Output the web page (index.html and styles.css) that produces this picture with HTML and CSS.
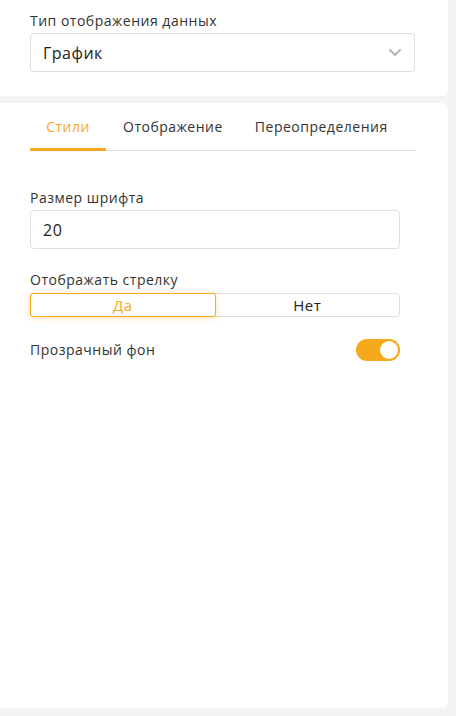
FILE: index.html
```html
<!DOCTYPE html>
<html lang="ru">
<head>
<meta charset="utf-8">
<link rel="stylesheet" href="styles.css">
</head>
<body>
<div class="page">
  <section class="card card-top">
    <label class="label">Тип отображения данных</label>
    <div class="select">
      <span>График</span>
      <svg class="chev" width="14" height="9" viewBox="0 0 14 9"><path d="M2 2l5 5 5-5" fill="none" stroke="#b5b5b5" stroke-width="2" stroke-linecap="round" stroke-linejoin="round"/></svg>
    </div>
  </section>
  <section class="card card-main">
    <nav class="tabs">
      <div class="tab active">Стили</div>
      <div class="tab">Отображение</div>
      <div class="tab">Переопределения</div>
    </nav>
    <div class="form">
      <div class="field">
        <label class="label">Размер шрифта</label>
        <div class="input">20</div>
      </div>
      <div class="field">
        <label class="label">Отображать стрелку</label>
        <div class="segment">
          <div class="seg active">Да</div>
          <div class="seg">Нет</div>
        </div>
      </div>
      <div class="row">
        <span class="label">Прозрачный фон</span>
        <div class="toggle"><div class="knob"></div></div>
      </div>
    </div>
  </section>
</div>
</body>
</html>
```
FILE: styles.css
```css
* { box-sizing: border-box; }
html, body { margin: 0; padding: 0; }
body {
  background: #f3f3f3;
  font-family: "Open Sans", "Noto Sans", sans-serif;
  color: #333;
  width: 456px;
  height: 716px;
  letter-spacing: 0.5px;
}
.page {
  display: flex;
  flex-direction: column;
  gap: 7px;
  width: 448px;
}
.card {
  background: #fff;
  border-radius: 0 0 6px 0;
}
.card-top {
  height: 96px;
  padding: 12px 33px 0 30px;
  display: flex;
  flex-direction: column;
  gap: 3px;
}
.label {
  font-size: 14px;
  line-height: 18px;
  color: #333;
}
.select {
  height: 39px;
  border: 1px solid #dedede;
  border-radius: 4px;
  display: flex;
  align-items: center;
  justify-content: space-between;
  padding: 0 12px 0 12px;
  font-size: 16px;
  color: #222;
}
.card-main {
  height: 605px;
  border-radius: 0 6px 6px 0;
  padding: 0 32px 0 30px;
}
.tabs {
  display: flex;
  border-bottom: 1px solid #dcdcdc;
  height: 48px;
}
.tab {
  font-size: 14px;
  padding-top: 14px;
  color: #333;
  white-space: nowrap;
}
.tab:nth-child(2) { margin-left: 17px; }
.tab:nth-child(3) { margin-left: 32px; }
.tab.active {
  color: #f8a81b;
  border-bottom: 3px solid #f8a81b;
  margin-bottom: -1px;
  width: 76px;
  text-align: center;
}
.form {
  padding-top: 38px;
  width: 370px;
  display: flex;
  flex-direction: column;
  gap: 24px;
}
.field {
  display: flex;
  flex-direction: column;
  gap: 3px;
}
.field + .field { margin-top: -2px; }
.input {
  height: 39px;
  border: 1px solid #dedede;
  border-radius: 4px;
  display: flex;
  align-items: center;
  padding-left: 12px;
  font-size: 16px;
  color: #222;
}
.segment {
  display: flex;
  height: 24px;
  border: 1px solid #dedede;
  border-radius: 4px;
  margin-top: 1px;
}
.seg {
  flex: 1;
  display: flex;
  align-items: center;
  justify-content: center;
  font-size: 15px;
  color: #222;
}
.seg.active {
  color: #f8a81b;
  border: 1px solid #f8a81b;
  border-radius: 3px;
  margin: -1px 0 -1px -1px;
  box-shadow: 0 1px 6px rgba(248, 168, 27, 0.35);
}
.row {
  display: flex;
  justify-content: space-between;
  align-items: center;
  margin-top: -2px;
}
.toggle {
  width: 44px;
  height: 22px;
  border-radius: 11px;
  background: #f8a81b;
  display: flex;
  align-items: center;
  justify-content: flex-end;
  padding: 2px;
}
.knob {
  width: 18px;
  height: 18px;
  border-radius: 50%;
  background: #fff;
}
```
